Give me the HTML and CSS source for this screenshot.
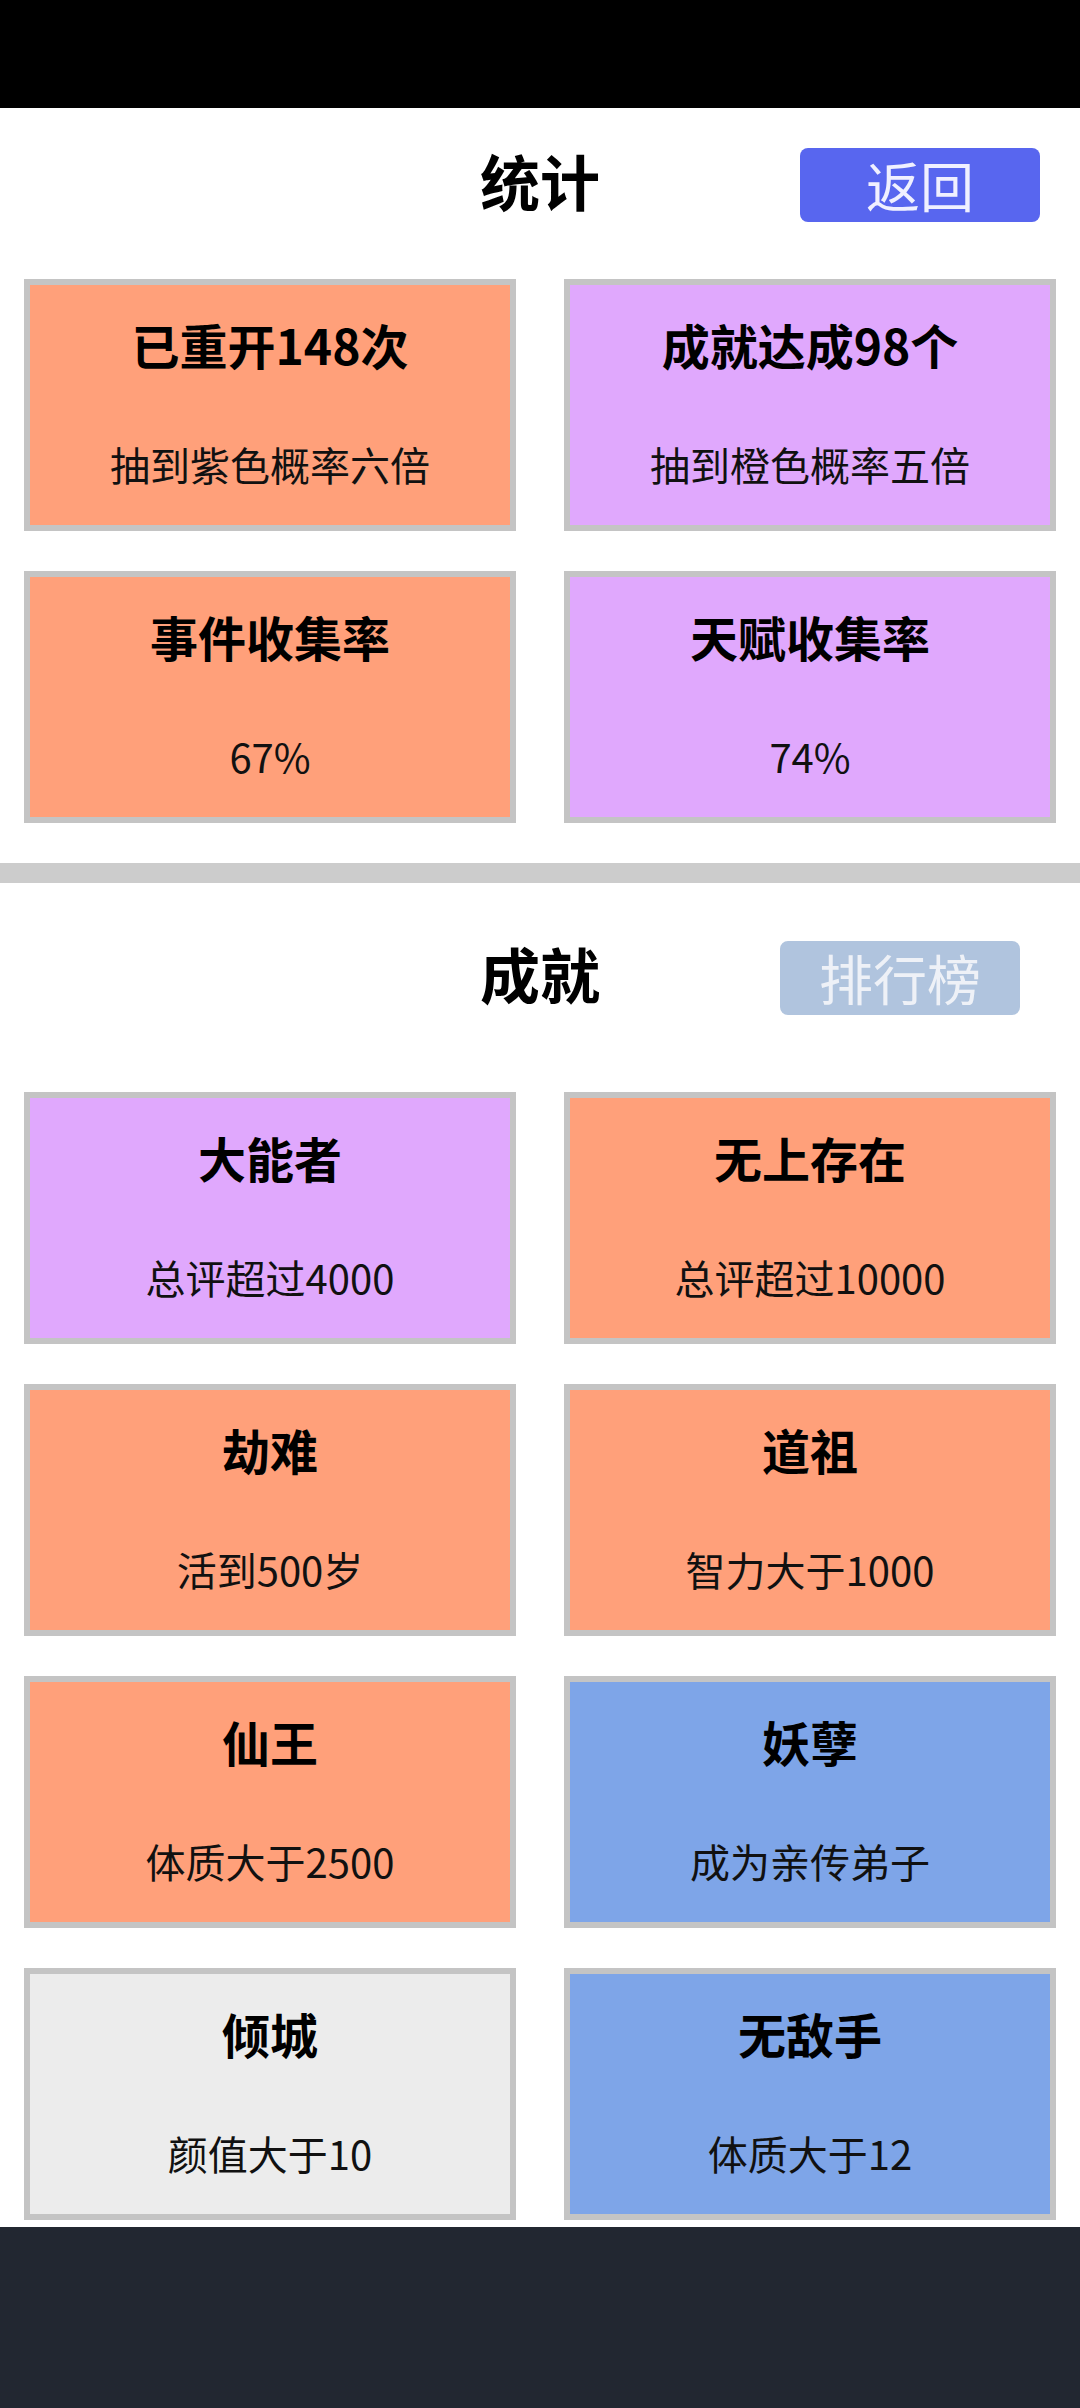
FILE: index.html
```html
<!DOCTYPE html>
<html lang="zh-CN">
<head>
<meta charset="utf-8">
<title>统计</title>
<link rel="stylesheet" href="styles.css">
</head>
<body>
<div class="page">
  <div class="statusbar"></div>

  <section class="section stats">
    <header class="head">
      <h1 class="head-title">统计</h1>
      <button class="btn btn-back">返回</button>
    </header>
    <div class="grid">
      <div class="card orange"><div class="card-title">已重开148次</div><div class="card-sub">抽到紫色概率六倍</div></div>
      <div class="card purple"><div class="card-title">成就达成98个</div><div class="card-sub">抽到橙色概率五倍</div></div>
      <div class="card orange"><div class="card-title">事件收集率</div><div class="card-sub">67%</div></div>
      <div class="card purple"><div class="card-title">天赋收集率</div><div class="card-sub">74%</div></div>
    </div>
  </section>

  <div class="divider"></div>

  <section class="section achievements">
    <header class="head head-ach">
      <h1 class="head-title">成就</h1>
      <button class="btn btn-rank">排行榜</button>
    </header>
    <div class="grid grid-ach">
      <div class="card purple"><div class="card-title">大能者</div><div class="card-sub">总评超过4000</div></div>
      <div class="card orange"><div class="card-title">无上存在</div><div class="card-sub">总评超过10000</div></div>
      <div class="card orange"><div class="card-title">劫难</div><div class="card-sub">活到500岁</div></div>
      <div class="card orange"><div class="card-title">道祖</div><div class="card-sub">智力大于1000</div></div>
      <div class="card orange"><div class="card-title">仙王</div><div class="card-sub">体质大于2500</div></div>
      <div class="card blue"><div class="card-title">妖孽</div><div class="card-sub">成为亲传弟子</div></div>
      <div class="card gray"><div class="card-title">倾城</div><div class="card-sub">颜值大于10</div></div>
      <div class="card blue"><div class="card-title">无敌手</div><div class="card-sub">体质大于12</div></div>
    </div>
  </section>

  <div class="navbar"></div>
</div>
</body>
</html>
```

FILE: styles.css
```css
* { box-sizing: border-box; }

html, body {
  margin: 0;
  padding: 0;
  background: #ffffff;
}

body {
  font-family: "Noto Sans CJK SC", "Noto Sans", sans-serif;
  color: #000;
}

.page {
  width: 1080px;
  height: 2408px;
  overflow: hidden;
  display: flex;
  flex-direction: column;
}

.statusbar {
  height: 108px;
  background: #000;
  flex: none;
}

.head {
  display: grid;
  grid-template-columns: 1fr auto 1fr;
  align-items: center;
  height: 74px;
  margin-top: 40px;
}

.head-title {
  grid-column: 2;
  margin: 0;
  font-size: 60px;
  font-weight: 700;
  line-height: 74px;
  position: relative;
  top: -5px;
}

.btn {
  grid-column: 3;
  justify-self: end;
  width: 240px;
  height: 74px;
  border: none;
  border-radius: 8px;
  font-family: "Noto Sans CJK SC", "Noto Sans", sans-serif;
  font-size: 54px;
  line-height: 74px;
  padding: 0;
  font-weight: 400;
}

.btn-back {
  background: #5866ef;
  color: #f0f0ff;
  margin-right: 40px;
}

.head-ach {
  margin-top: 58px;
}

.btn-rank {
  background: #b0c4de;
  color: #eef1f7;
  margin-right: 60px;
}

.grid {
  display: grid;
  grid-template-columns: 492px 492px;
  column-gap: 48px;
  row-gap: 40px;
  padding: 0 24px;
  margin-top: 57px;
}

.grid-ach {
  margin-top: 77px;
}

.card {
  height: 252px;
  border: 6px solid #c4c4c4;
  display: flex;
  flex-direction: column;
  align-items: center;
  padding-top: 30px;
}

.card-title {
  font-size: 48px;
  font-weight: 700;
  line-height: 58px;
}

.card-sub {
  margin-top: 67px;
  font-size: 40px;
  line-height: 48px;
  color: #111;
}

.orange { background: #ffa07a; }
.purple { background: #e0a8fd; }
.blue { background: #7ea5e8; }
.gray { background: #ececec; }

.divider {
  height: 20px;
  background: #cccccc;
  margin-top: 40px;
  flex: none;
}

.navbar {
  margin-top: 7px;
  flex: 1;
  background: #222731;
}
```
